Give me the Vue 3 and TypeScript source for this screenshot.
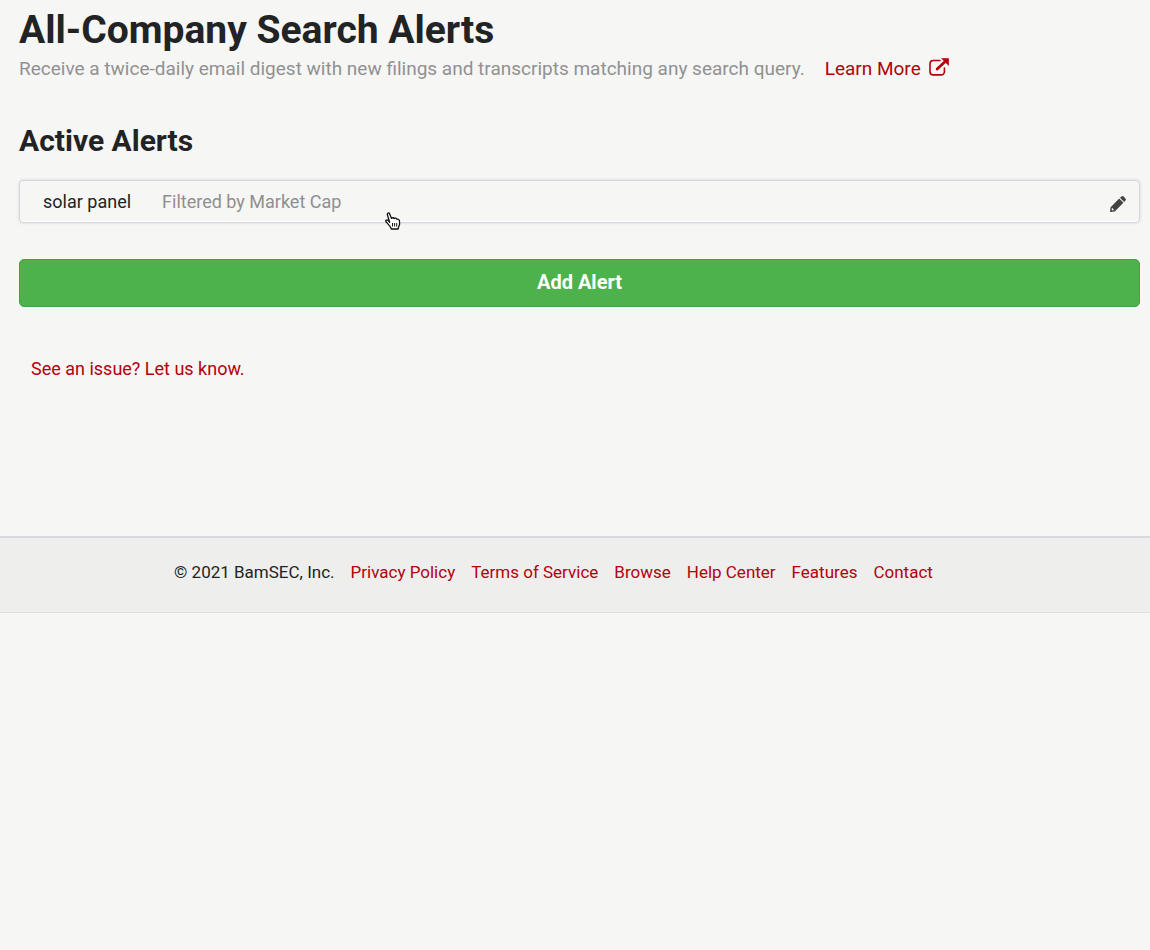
<script setup lang="ts">
interface Alert {
  id: number
  query: string
  filter: string
}

interface FooterLink {
  label: string
  href: string
}

const alerts: Alert[] = [{ id: 1, query: 'solar panel', filter: 'Filtered by Market Cap' }]

const links: FooterLink[] = [
  { label: 'Privacy Policy', href: '#privacy' },
  { label: 'Terms of Service', href: '#terms' },
  { label: 'Browse', href: '#browse' },
  { label: 'Help Center', href: '#help' },
  { label: 'Features', href: '#features' },
  { label: 'Contact', href: '#contact' },
]
</script>

<template>
  <div class="page">
    <main class="content">
      <h1 class="title">All-Company Search Alerts</h1>
      <p class="intro">
        <span>Receive a twice-daily email digest with new filings and transcripts matching any search query.</span>
        <a class="learn" href="#learn-more">
          Learn More
          <svg class="external" viewBox="0 0 20 18" aria-hidden="true">
            <path
              d="M11 2.5H4.2A3.2 3.2 0 0 0 1 5.7v8A3.2 3.2 0 0 0 4.2 16.9h8a3.2 3.2 0 0 0 3.2-3.2V10"
              fill="none"
              stroke="currentColor"
              stroke-width="1.6"
              stroke-linecap="round"
            />
            <path d="M8.2 11 16.5 3.2" fill="none" stroke="currentColor" stroke-width="2.8" stroke-linecap="round" />
            <path d="M12.6.4h7V7.4z" fill="currentColor" stroke="currentColor" stroke-width=".6" stroke-linejoin="round" />
          </svg>
        </a>
      </p>

      <h2 class="heading">Active Alerts</h2>
      <ul class="alerts">
        <li v-for="alert in alerts" :key="alert.id" class="alert">
          <span class="query">{{ alert.query }}</span>
          <span class="filter">{{ alert.filter }}</span>
          <button class="edit" type="button" :aria-label="`Edit ${alert.query}`">
            <svg class="pencil" viewBox="0 0 16 16" aria-hidden="true">
              <path
                fill="currentColor"
                fill-rule="evenodd"
                d="M9.2 2.6 13.4 6.8 4.8 15.4 0 16 .6 11.2zM1.9 12.3 1.6 13.5 2.5 14.4 3.7 14.1 3.7 13.1 2.9 13.1 2.9 12.3z"
              />
              <path fill="currentColor" d="M10 1.8 11.4.6Q12.6-.4 13.6.6L15.4 2.4Q16.4 3.4 15.4 4.6L14.2 6z" />
            </svg>
          </button>
          <svg class="pointer" viewBox="0 0 16 18" aria-hidden="true">
            <path
              d="M4.6 10.2 2.4 2.8C1.9.9 4 .2 4.7 2L6.5 6.4C7.3 5.4 8.7 5.6 9.2 6.6 10.1 5.8 11.4 6.2 11.8 7.2 13.1 6.7 14.4 7.7 14.5 9.2L14.6 11.7C14.6 13.5 13.3 14.7 13.2 17H6.3C6 15 4.3 13.4 2.9 11.9L.9 9.5C.3 8.2 2 7.4 3 8.4z"
              fill="#fff"
              stroke="#111"
              stroke-width="1.3"
              stroke-linejoin="round"
            />
            <path d="M7.5 11v3.5M9.6 11v3.5M11.7 11v3.5" fill="none" stroke="#111" stroke-width="1" />
          </svg>
        </li>
      </ul>

      <button class="add" type="button">Add Alert</button>
      <a class="issue" href="#feedback">See an issue? Let us know.</a>
    </main>

    <footer class="footer">
      <span>© 2021 BamSEC, Inc.</span>
      <a v-for="link in links" :key="link.label" :href="link.href">{{ link.label }}</a>
    </footer>
  </div>
</template>

<style>
body {
  margin: 0;
  background: #f6f6f5;
}
</style>

<style scoped>
.page {
  color: #222324;
  font-family: Roboto, "Liberation Sans", sans-serif;
  font-size: 18px;
  line-height: 24px;
}

a {
  color: #b3000c;
  text-decoration: none;
}

.content {
  display: flex;
  flex-direction: column;
  padding: 6px 10px 155px 19px;
}

.title {
  margin: 0;
  font-size: 39px;
  font-weight: 700;
  line-height: 48px;
}

.intro {
  display: flex;
  gap: 20px;
  margin: 3px 0 0;
  color: #919191;
  font-size: 19px;
}

.learn {
  display: flex;
  gap: 8px;
}

.external {
  width: 20px;
  height: 18px;
  margin-top: 1px;
}

.heading {
  margin: 42px 0 0;
  font-size: 30px;
  font-weight: 700;
  line-height: 36px;
}

.alerts {
  margin: 21px 0 0;
  padding: 0;
  list-style: none;
}

.alert {
  position: relative;
  display: flex;
  align-items: center;
  box-sizing: border-box;
  min-height: 43px;
  padding: 0 13px 0 23px;
  border: 1px solid #d5d6dc;
  border-radius: 4px;
  box-shadow: 0 0 3px #d3d4da, inset 0 -1px #fff;
}

.filter {
  margin-left: 31px;
  color: #8f8f8f;
}

.edit {
  display: flex;
  margin-left: auto;
  padding: 4px 0 0;
  border: 0;
  background: none;
  color: #444;
}

.pencil {
  width: 16px;
  height: 16px;
}

.pointer {
  position: absolute;
  top: 31px;
  left: 365px;
  width: 16px;
  height: 18px;
}

.add {
  margin-top: 36px;
  padding: 10px 11px 12px;
  border: 1px solid #43a243;
  border-radius: 5px;
  background: #4db24c;
  color: #fff;
  font-family: inherit;
  font-size: 20px;
  font-weight: 700;
  line-height: 24px;
}

.issue {
  align-self: flex-start;
  margin: 50px 0 0 12px;
}

.footer {
  display: flex;
  flex-wrap: wrap;
  gap: 16px;
  padding: 22px 0 28px 174px;
  border-top: 2px solid #d9dade;
  border-bottom: 1px solid #dfdfdf;
  background: #eeeeec;
  font-size: 17px;
}
</style>
